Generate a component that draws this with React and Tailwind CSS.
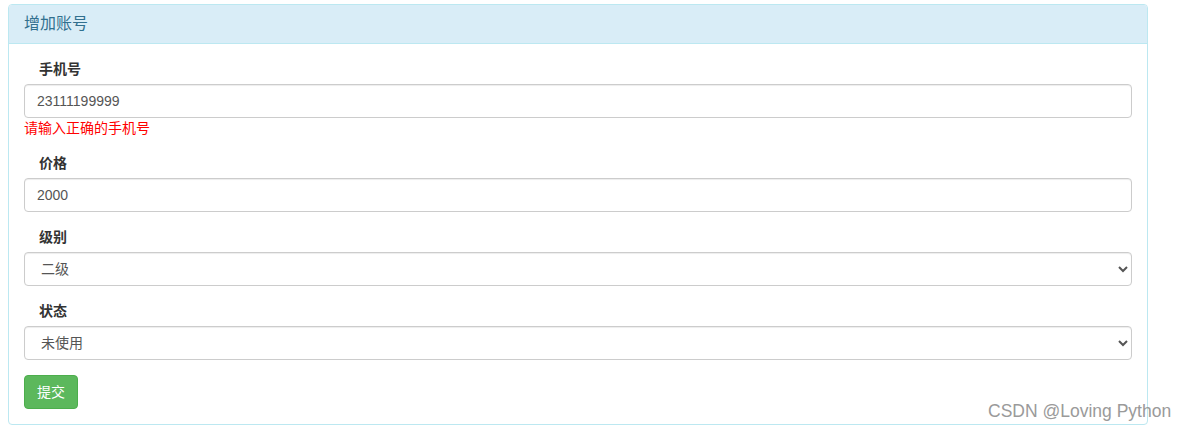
import React, { useState } from "react";

const fontStack = {
  fontFamily: '"Liberation Sans", "Noto Sans CJK SC", sans-serif',
};

const App = () => {
  const [phone, setPhone] = useState("23111199999");
  const [price, setPrice] = useState("2000");
  const [level, setLevel] = useState("2");
  const [status, setStatus] = useState("0");

  const inputCls =
    "block w-full h-[34px] px-[12px] py-[6px] text-[14px] text-[#555] bg-white border border-[#ccc] rounded-[4px] shadow-[inset_0_1px_1px_rgba(0,0,0,0.075)] outline-none";

  return (
    <div
      className="relative min-h-[430px] bg-white pt-[4px] pl-[8px] text-[14px] leading-[20px] text-[#333]"
      style={fontStack}
    >
      <div className="w-[1140px] border border-[#bce8f1] rounded-[4px] bg-white">
        {/* header */}
        <div className="bg-[#d9edf7] border-b border-[#bce8f1] rounded-t-[3px] px-[15px] py-[9px] text-[16px] leading-[20px] text-[#31708f]">
          增加账号
        </div>

        {/* body */}
        <div className="p-[15px]">
          <div className="mb-[15px]">
            <label className="block px-[15px] mb-[5px] font-bold">手机号</label>
            <input
              className={inputCls}
              value={phone}
              onChange={(e) => setPhone(e.target.value)}
            />
            <span className="block text-[14px] leading-[20px] text-[red]">
              请输入正确的手机号
            </span>
          </div>

          <div className="mb-[15px]">
            <label className="block px-[15px] mb-[5px] font-bold">价格</label>
            <input
              className={inputCls}
              value={price}
              onChange={(e) => setPrice(e.target.value)}
            />
          </div>

          <div className="mb-[15px]">
            <label className="block px-[15px] mb-[5px] font-bold">级别</label>
            <select
              className={inputCls + " px-[8px]"}
              value={level}
              onChange={(e) => setLevel(e.target.value)}
            >
              <option value="1">一级</option>
              <option value="2">二级</option>
              <option value="3">三级</option>
            </select>
          </div>

          <div className="mb-[15px]">
            <label className="block px-[15px] mb-[5px] font-bold">状态</label>
            <select
              className={inputCls + " px-[8px]"}
              value={status}
              onChange={(e) => setStatus(e.target.value)}
            >
              <option value="0">未使用</option>
              <option value="1">已使用</option>
            </select>
          </div>

          <button className="h-[34px] px-[12px] py-[6px] text-[14px] leading-[20px] text-white bg-[#5cb85c] border border-[#4cae4c] rounded-[4px]">
            提交
          </button>
        </div>
      </div>

      {/* watermark */}
      <div className="absolute left-[988px] top-[400px] text-[17.5px] leading-[22px] text-[#9a9a9a]">
        CSDN @Loving Python
      </div>
    </div>
  );
};

export default App;
